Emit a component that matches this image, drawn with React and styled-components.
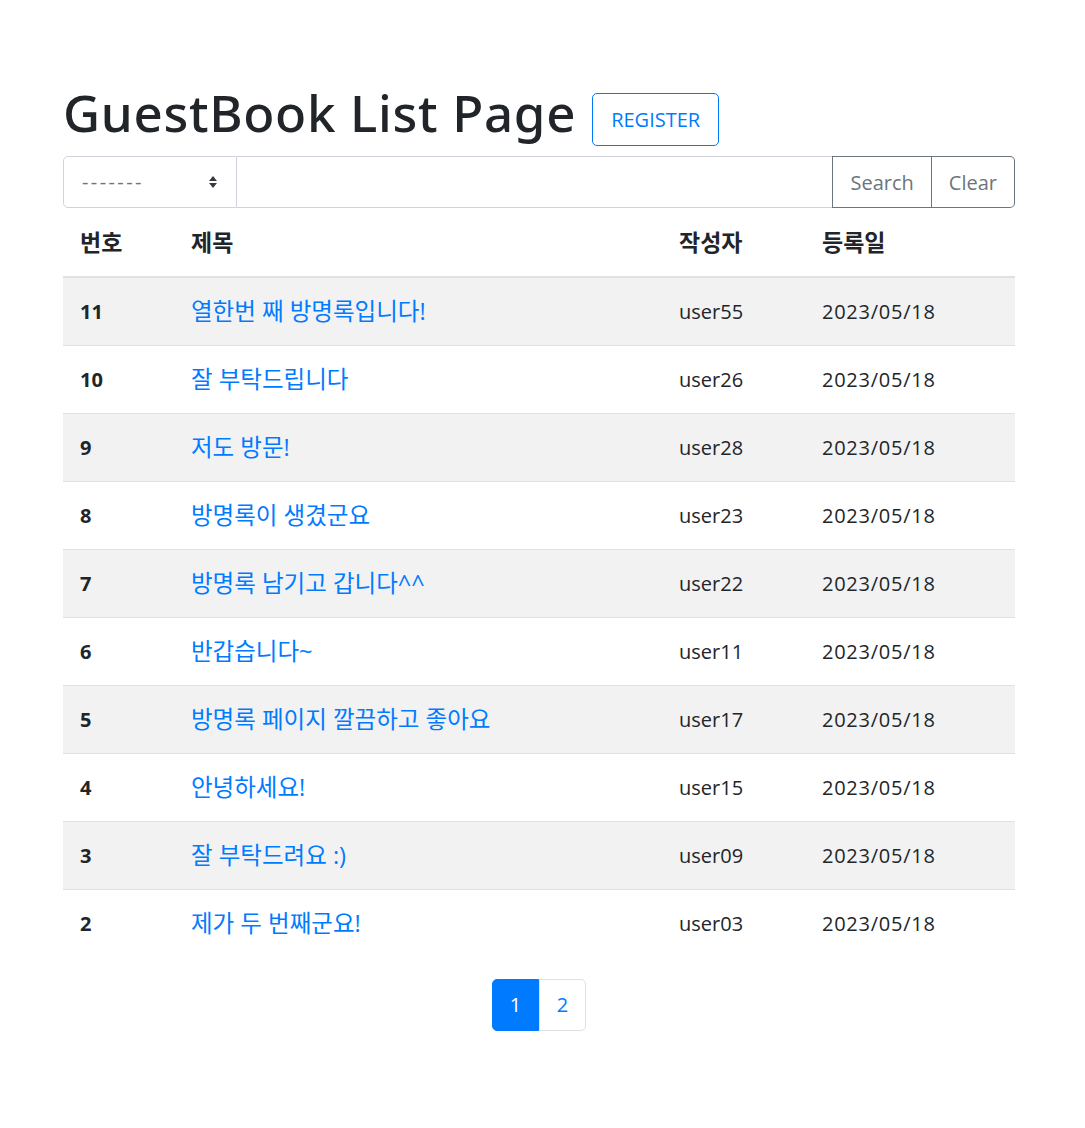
import React from "react";
import styled, { createGlobalStyle } from "styled-components";

const rows = [
  { no: 11, title: "열한번 째 방명록입니다!", writer: "user55", date: "2023/05/18" },
  { no: 10, title: "잘 부탁드립니다", writer: "user26", date: "2023/05/18" },
  { no: 9, title: "저도 방문!", writer: "user28", date: "2023/05/18" },
  { no: 8, title: "방명록이 생겼군요", writer: "user23", date: "2023/05/18" },
  { no: 7, title: "방명록 남기고 갑니다^^", writer: "user22", date: "2023/05/18" },
  { no: 6, title: "반갑습니다~", writer: "user11", date: "2023/05/18" },
  { no: 5, title: "방명록 페이지 깔끔하고 좋아요", writer: "user17", date: "2023/05/18" },
  { no: 4, title: "안녕하세요!", writer: "user15", date: "2023/05/18" },
  { no: 3, title: "잘 부탁드려요 :)", writer: "user09", date: "2023/05/18" },
  { no: 2, title: "제가 두 번째군요!", writer: "user03", date: "2023/05/18" },
];

const GlobalStyle = createGlobalStyle`
  body {
    margin: 0;
    background: #fff;
    color: #212529;
    font-family: "Open Sans", "Noto Sans CJK KR", sans-serif;
    font-size: 20px;
    line-height: 1.5;
  }
  * { box-sizing: border-box; }
`;

const App = () => {
  return (
    <>
      <GlobalStyle />
      <Container>
        <Header>
          <Title>GuestBook List Page</Title>
          <OutlineButton>REGISTER</OutlineButton>
        </Header>

        <SearchGroup>
          <Select>
            <span>-------</span>
            <svg width="10" height="16" viewBox="0 0 10 16">
              <path d="M5 2 L9 7 H1 Z" fill="#343a40" />
              <path d="M5 14 L9 9 H1 Z" fill="#343a40" />
            </svg>
          </Select>
          <SearchInput />
          <GroupButton>Search</GroupButton>
          <GroupButton last>Clear</GroupButton>
        </SearchGroup>

        <Table>
          <colgroup>
            <col style={{ width: 111 }} />
            <col style={{ width: 488 }} />
            <col style={{ width: 143 }} />
            <col />
          </colgroup>
          <thead>
            <tr>
              <Th>번호</Th>
              <Th>제목</Th>
              <Th>작성자</Th>
              <Th>등록일</Th>
            </tr>
          </thead>
          <tbody>
            {rows.map((r, i) => (
              <Tr key={r.no} striped={i % 2 === 0}>
                <Td bold>{r.no}</Td>
                <Td>
                  <TitleLink href="#">{r.title}</TitleLink>
                </Td>
                <Td>{r.writer}</Td>
                <Td spaced>{r.date}</Td>
              </Tr>
            ))}
          </tbody>
        </Table>

        <Pagination>
          <PageItem active first>1</PageItem>
          <PageItem last>2</PageItem>
        </Pagination>
      </Container>
    </>
  );
};

const Container = styled.div`
  width: 952px;
  margin: 0 auto 0 63px;
  padding-top: 80px;
  padding-bottom: 98px;
`;

const Header = styled.div`
  display: flex;
  align-items: center;
  gap: 16px;
  height: 76px;
`;

const Title = styled.h1`
  margin: 0 0 11px;
  font-family: "Noto Sans", "Open Sans", sans-serif;
  font-size: 51px;
  font-weight: 500;
  line-height: 1.2;
  letter-spacing: 0.7px;
`;

const OutlineButton = styled.button`
  height: 53px;
  padding: 0 18px;
  font-family: "Open Sans", sans-serif;
  font-size: 20px;
  color: #007bff;
  background: #fff;
  border: 1px solid #007bff;
  border-radius: 5px;
  margin-top: 2px;
`;

const SearchGroup = styled.div`
  display: flex;
  height: 52px;
`;

const Select = styled.div`
  width: 174px;
  display: flex;
  align-items: center;
  justify-content: space-between;
  padding: 0 18px;
  border: 1px solid #ced4da;
  border-radius: 5px 0 0 5px;
  color: #6c757d;
  font-size: 20px;
  letter-spacing: 2.4px;
`;

const SearchInput = styled.div`
  flex: 1;
  border: 1px solid #ced4da;
  border-left: none;
  border-right: none;
`;

const GroupButton = styled.button`
  font-family: "Open Sans", sans-serif;
  font-size: 20px;
  color: #6c757d;
  background: #fff;
  border: 1px solid #6c757d;
  border-left: ${(p) => (p.last ? "none" : "1px solid #6c757d")};
  border-radius: ${(p) => (p.last ? "0 5px 5px 0" : "0")};
  padding: 0 17px;
`;

const Table = styled.table`
  width: 100%;
  margin-top: 12px;
  border-collapse: collapse;
  table-layout: fixed;
`;

const Th = styled.th`
  text-align: left;
  font-size: 23px;
  font-weight: 700;
  line-height: 30px;
  padding: 6px 17px 19px;
  height: 57px;
  border-bottom: 2px solid #dee2e6;
`;

const Tr = styled.tr`
  background: ${(p) => (p.striped ? "#f2f2f2" : "#fff")};
  &:last-child td {
    border-bottom: none;
  }
`;

const Td = styled.td`
  height: 68px;
  padding: 1px 17px 0;
  font-weight: ${(p) => (p.bold ? 700 : 400)};
  letter-spacing: ${(p) => (p.spaced ? "0.75px" : "normal")};
  border-bottom: 1px solid #dee2e6;
  vertical-align: middle;
  white-space: nowrap;
`;

const TitleLink = styled.a`
  color: #007bff;
  font-size: 23.5px;
  letter-spacing: 0;
  text-decoration: none;
`;

const Pagination = styled.div`
  display: flex;
  justify-content: center;
  margin-top: 22px;
`;

const PageItem = styled.div`
  width: 47px;
  height: 52px;
  display: flex;
  align-items: center;
  justify-content: center;
  color: ${(p) => (p.active ? "#fff" : "#007bff")};
  background: ${(p) => (p.active ? "#007bff" : "#fff")};
  border: 1px solid ${(p) => (p.active ? "#007bff" : "#dee2e6")};
  border-radius: ${(p) => (p.first ? "5px 0 0 5px" : p.last ? "0 5px 5px 0" : "0")};
`;

export default App;
